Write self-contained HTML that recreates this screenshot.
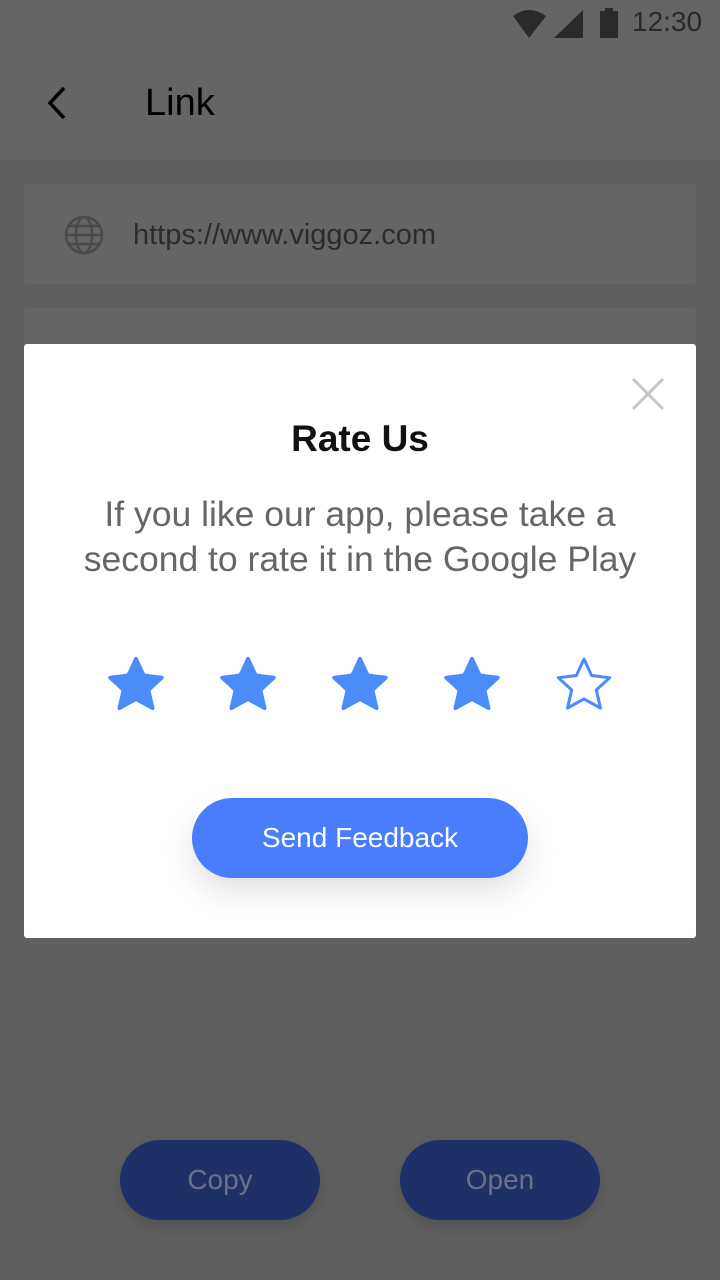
<!DOCTYPE html>
<html><head><meta charset="utf-8"><style>
*{margin:0;padding:0;box-sizing:border-box}
body{width:720px;height:1280px;background:#5f5f5f;position:relative;overflow:hidden;font-family:"Liberation Sans",sans-serif}
.abs{position:absolute}
</style></head><body>
<div class="abs" style="left:0;top:0;width:720px;height:160px;background:#656565"></div>
<svg class="abs" style="left:510px;top:6px" width="115" height="34" viewBox="0 0 115 34">
<path d="M3 10 Q19 -2 36 10 L19 32 Z" fill="#2a2a2a"/>
<path d="M44 32 L73 4 L73 32 Z" fill="#2a2a2a"/>
<rect x="90" y="5" width="18" height="27" fill="#2a2a2a"/><rect x="95" y="2" width="8" height="4" fill="#2a2a2a"/>
</svg>
<div class="abs" style="left:632px;top:6px;font-size:28px;color:#2a2a2a">12:30</div>
<svg class="abs" style="left:40px;top:84px" width="30" height="40" viewBox="0 0 30 40"><path d="M24 4 L10 19 L24 34" stroke="#000" stroke-width="3.5" fill="none"/></svg>
<div class="abs" style="left:145px;top:82px;font-size:38px;color:#000">Link</div>
<div class="abs" style="left:24px;top:184px;width:672px;height:100px;background:#656565;border-radius:4px"></div>
<svg class="abs" style="left:64px;top:214px" width="40" height="42" viewBox="0 0 40 42"><g stroke="#4a4a4a" stroke-width="2.5" fill="none"><circle cx="20" cy="21" r="18"/><ellipse cx="20" cy="21" rx="8" ry="18"/><line x1="2" y1="21" x2="38" y2="21"/><path d="M5 12 H35 M5 30 H35"/></g></svg>
<div class="abs" style="left:133px;top:219px;font-size:29px;color:#2c2c2c">https://www.viggoz.com</div>
<div class="abs" style="left:24px;top:308px;width:672px;height:40px;background:#656565;border-radius:4px"></div>
<div class="abs" style="left:120px;top:1140px;width:200px;height:80px;border-radius:40px;background:#1f2f68;box-shadow:0 6px 14px rgba(0,0,0,.15);color:#6a7085;font-size:28px;text-align:center;line-height:80px">Copy</div>
<div class="abs" style="left:400px;top:1140px;width:200px;height:80px;border-radius:40px;background:#1f2f68;box-shadow:0 6px 14px rgba(0,0,0,.15);color:#6a7085;font-size:28px;text-align:center;line-height:80px">Open</div>

<div class="abs" style="left:24px;top:344px;width:672px;height:594px;background:#fff;border-radius:3px">
<svg class="abs" style="left:606px;top:32px" width="36" height="36" viewBox="0 0 36 36"><path d="M3 3 L33 33 M33 3 L3 33" stroke="#c4c4c4" stroke-width="3"/></svg>
<div class="abs" style="left:0;top:74px;width:672px;text-align:center;font-size:37px;font-weight:bold;color:#111">Rate Us</div>
<div class="abs" style="left:0;top:148px;width:672px;text-align:center;font-size:35.5px;line-height:45px;color:#666">If you like our app, please take a<br>second to rate it in the Google Play</div>
<svg class="abs" style="left:0;top:300px" width="672" height="90" viewBox="0 0 672 90">
<defs><polygon id="s" points="0,-27 7.6,-10.5 25.7,-8.3 12.3,4 16.5,22 0,13 -16.5,22 -12.3,4 -25.7,-8.3 -7.6,-10.5" stroke-linejoin="round"/></defs>
<g fill="#4b8cfb" stroke="#4b8cfb" stroke-width="4" stroke-linejoin="round">
<use href="#s" x="112" y="42"/><use href="#s" x="224" y="42"/><use href="#s" x="336" y="42"/><use href="#s" x="448" y="42"/></g>
<use href="#s" x="560" y="42" fill="none" stroke="#4b8cfb" stroke-width="3"/>
</svg>
<div class="abs" style="left:168px;top:454px;width:336px;height:80px;border-radius:40px;background:#4a7dfe;box-shadow:0 14px 30px rgba(0,0,0,.12);color:#fff;font-size:28px;text-align:center;line-height:80px">Send Feedback</div>
</div>
</body></html>
